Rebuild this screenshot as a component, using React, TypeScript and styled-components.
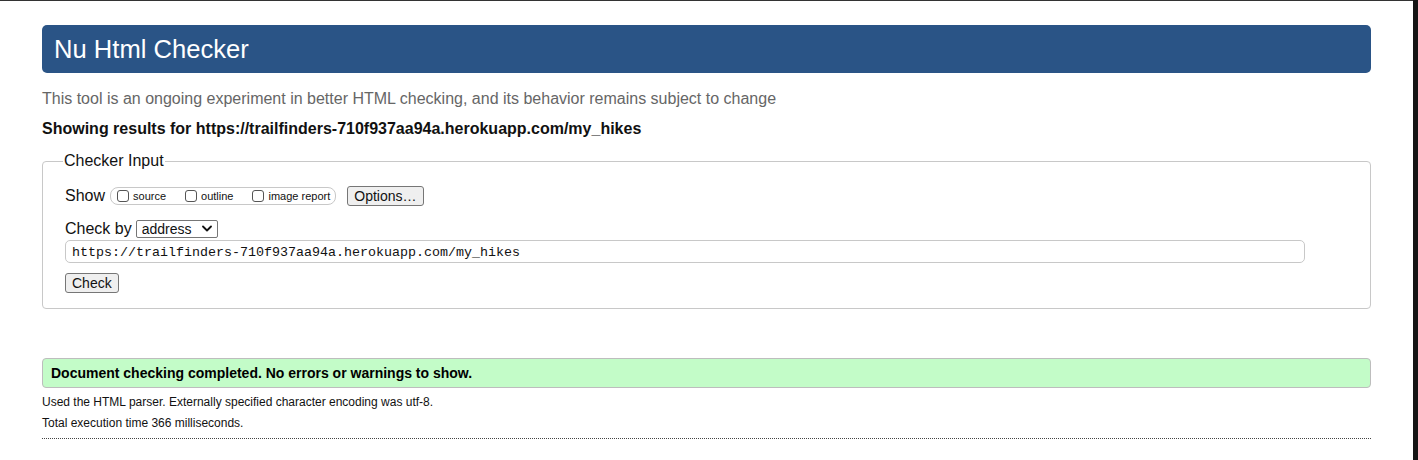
import React from "react";
import styled, { createGlobalStyle } from "styled-components";

const Global = createGlobalStyle`
  html, body { margin: 0; padding: 0; background: #fff; }
  body { font-family: "Liberation Sans", Arial, sans-serif; color: #000; }
`;

const Screen = styled.div`
  display: flex;
  width: 1418px;
  height: 460px;
  overflow: hidden;
`;

const Page = styled.main`
  width: 1413px;
  box-sizing: border-box;
  border-top: 1px solid #333;
  padding: 24px 42px 0;
  display: flex;
  flex-direction: column;
`;

const SideStrip = styled.div`
  width: 5px;
  background: #151515;
`;

const Header = styled.h1`
  margin: 0;
  height: 48px;
  box-sizing: border-box;
  background: #2a5486;
  border-radius: 5px;
  color: #fff;
  font-weight: normal;
  font-size: 25.6px;
  line-height: 48px;
  padding-left: 12px;
`;

const Intro = styled.p`
  margin: 17px 0 0;
  font-size: 16px;
  line-height: 18px;
  color: #666;
`;

const Results = styled.p`
  margin: 12px 0 0;
  font-size: 16px;
  line-height: 18px;
  font-weight: bold;
  color: #111;
`;

const Fieldset = styled.fieldset`
  margin: 14px 0 0;
  padding: 4px 22px 15px;
  border: 1px solid #c8c8c8;
  border-radius: 4px;
  min-width: 0;
`;

const Legend = styled.legend`
  font-size: 16px;
  padding: 0 1px;
  margin-left: -2px;
  color: #111;
`;

const Row = styled.div<{ $top?: number }>`
  display: flex;
  align-items: center;
  margin-top: ${(p) => p.$top ?? 0}px;
`;

const Label = styled.span`
  font-size: 16px;
  color: #111;
  margin-right: 5px;
`;

const ShowGroup = styled.div`
  display: flex;
  align-items: center;
  height: 18px;
  box-sizing: border-box;
  border: 1px solid #c8c8c8;
  border-radius: 8px;
  padding: 0 5px 0 6px;
  gap: 19px;
`;

const CheckItem = styled.label`
  display: flex;
  align-items: center;
  font-size: 11px;
  color: #111;
`;

const Box = styled.input`
  appearance: none;
  width: 12px;
  height: 12px;
  margin: 0 4px 0 0;
  border: 1px solid #555;
  border-radius: 3px;
  background: #fff;
  box-sizing: border-box;
`;

const Button = styled.button<{ $h: number; $left?: number }>`
  font-family: "Liberation Sans", Arial, sans-serif;
  font-size: 14px;
  height: ${(p) => p.$h}px;
  margin-left: ${(p) => p.$left ?? 0}px;
  padding: 0 6px;
  background: #efefef;
  border: 1px solid #767676;
  border-radius: 3px;
  color: #111;
  line-height: 1;
`;

const SelectWrap = styled.div`
  position: relative;
  display: inline-flex;
  margin-left: -1px;
`;

const Select = styled.select`
  appearance: none;
  font-family: "Liberation Sans", Arial, sans-serif;
  font-size: 14px;
  width: 82px;
  height: 18px;
  box-sizing: border-box;
  padding: 0 0 0 5px;
  border: 1px solid #767676;
  border-radius: 2px;
  background: #fff;
  color: #111;
  line-height: 16px;
`;

const Chevron = styled.svg`
  position: absolute;
  right: 6px;
  top: 5px;
  pointer-events: none;
`;

const UrlInput = styled.input`
  display: block;
  width: 1240px;
  height: 23px;
  box-sizing: border-box;
  margin-top: 2px;
  padding: 2px 6px 0;
  border: 1px solid #c8c8c8;
  border-radius: 5px;
  font-family: "Liberation Mono", "DejaVu Sans Mono", monospace;
  font-size: 13.33px;
  line-height: 19px;
  color: #111;
`;

const Success = styled.p`
  margin: 49px 0 0;
  height: 30px;
  box-sizing: border-box;
  background: #c3fcc8;
  border: 1px solid #bdbdbd;
  border-radius: 4px;
  padding-left: 8px;
  font-size: 14px;
  font-weight: bold;
  line-height: 28px;
  color: #000;
`;

const Note = styled.p<{ $top: number }>`
  margin: ${(p) => p.$top}px 0 0;
  font-size: 12px;
  line-height: 14px;
  color: #111;
`;

const Divider = styled.hr`
  margin: 8px 0 0;
  border: 0;
  border-bottom: 1px dotted #444;
`;

export default function App() {
  return (
    <>
      <Global />
      <Screen>
        <Page>
          <Header>Nu Html Checker</Header>
          <Intro>
            This tool is an ongoing experiment in better HTML checking, and its behavior remains subject to change
          </Intro>
          <Results>Showing results for https://trailfinders-710f937aa94a.herokuapp.com/my_hikes</Results>
          <Fieldset>
            <Legend>Checker Input</Legend>
            <Row $top={12}>
              <Label>Show</Label>
              <ShowGroup>
                <CheckItem>
                  <Box type="checkbox" />
                  source
                </CheckItem>
                <CheckItem>
                  <Box type="checkbox" />
                  outline
                </CheckItem>
                <CheckItem>
                  <Box type="checkbox" />
                  image report
                </CheckItem>
              </ShowGroup>
              <Button $h={20} $left={11}>Options…</Button>
            </Row>
            <Row $top={14}>
              <Label>Check by</Label>
              <SelectWrap>
                <Select defaultValue="address">
                  <option value="address">address</option>
                  <option value="file">file upload</option>
                  <option value="text">text input</option>
                </Select>
                <Chevron width="10" height="7" viewBox="0 0 10 7">
                  <path d="M1 1.5 L5 5.5 L9 1.5" fill="none" stroke="#111" strokeWidth="1.8" strokeLinecap="round" strokeLinejoin="round" />
                </Chevron>
              </SelectWrap>
            </Row>
            <UrlInput defaultValue="https://trailfinders-710f937aa94a.herokuapp.com/my_hikes" />
            <Row $top={10}>
              <Button $h={20}>Check</Button>
            </Row>
          </Fieldset>
          <Success>Document checking completed. No errors or warnings to show.</Success>
          <Note $top={7}>Used the HTML parser. Externally specified character encoding was utf-8.</Note>
          <Note $top={7}>Total execution time 366 milliseconds.</Note>
          <Divider />
        </Page>
        <SideStrip />
      </Screen>
    </>
  );
}
